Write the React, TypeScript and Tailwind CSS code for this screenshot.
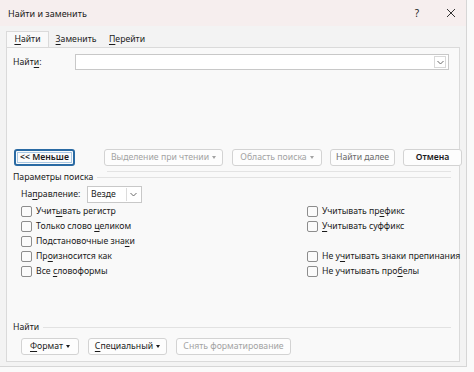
import React from 'react';

function U({ children }: { children: React.ReactNode }) {
  return <span className="underline underline-offset-[1.5px]">{children}</span>;
}

function Caret() {
  return <span className="ml-[3px] inline-block border-x-[2.5px] border-t-[3px] border-x-transparent border-t-current" />;
}

function Chevron() {
  return (
    <svg width="9" height="9" viewBox="0 0 9 9" fill="none" stroke="#6b6b6b" strokeWidth="1">
      <path d="M1.5 3l3 3 3-3" />
    </svg>
  );
}

function Btn({ children, disabled, className = '' }: { children: React.ReactNode; disabled?: boolean; className?: string }) {
  return (
    <div
      className={`flex h-[17px] shrink-0 items-center justify-center whitespace-nowrap rounded-[3px] border border-[#d3d3d3] bg-[#fdfdfd] ${disabled ? 'text-[#a3a3a3]' : 'text-[#1b1b1b]'} ${className}`}
    >
      {children}
    </div>
  );
}

function Check({ children }: { children: React.ReactNode }) {
  return (
    <div className="flex h-[15px] items-center gap-[4px] whitespace-nowrap">
      <span className="h-[11px] w-[11px] shrink-0 rounded-[2px] border border-[#8d8d8d] bg-[#fbfbfb]" />
      <span>{children}</span>
    </div>
  );
}

function Legend({ children, className = '' }: { children: React.ReactNode; className?: string }) {
  return (
    <div className={`flex h-[10px] items-center gap-[4px] whitespace-nowrap ${className}`}>
      <span>{children}</span>
      <span className="h-px flex-1 bg-[#e2e2e2]" />
    </div>
  );
}

export default function App() {
  return (
    <div className="h-[372px] w-[474px] bg-[#fafafa] text-[8.7px] leading-none text-[#1b1b1b]" style={{ fontFamily: '"Noto Sans", sans-serif' }}>
      <div className="flex h-[367px] w-[467px] flex-col border-b border-r border-[#d6d6d6] bg-[#f3f3f3]">
        {/* title bar */}
        <div className="flex h-[26px] items-center bg-[#f6eeee] pl-[8px] pr-[10px] text-[9px]">
          <span className="flex-1">Найти и заменить</span>
          <span className="mr-[27px] text-[10px]">?</span>
          <svg width="10" height="10" viewBox="0 0 10 10" stroke="#333" strokeWidth="1">
            <path d="M1 1l8 8M9 1l-8 8" />
          </svg>
        </div>

        {/* tabs */}
        <div className="mt-[5px] flex h-[16px] items-end whitespace-nowrap px-[6px]">
          <div className="flex h-[16px] w-[43px] items-center justify-center border-x border-t border-[#dadada] bg-[#f9f9f9]">
            <span>
              <U>Н</U>айти
            </span>
          </div>
          <div className="flex h-[15px] w-[54px] items-center justify-center">
            <span>
              <U>З</U>аменить
            </span>
          </div>
          <div className="flex h-[15px] w-[48px] items-center justify-center">
            <span>
              <U>П</U>ерейти
            </span>
          </div>
        </div>

        {/* panel */}
        <div className="mx-[6px] mb-[4px] flex flex-1 flex-col border border-[#dadada] bg-[#f9f9f9] px-[6px] pt-[6px]">
          <div className="flex h-[16px] items-center">
            <span className="w-[62px] shrink-0">
              Найт<U>и</U>:
            </span>
            <div className="flex h-[16px] flex-1 items-center justify-end border border-[#c8c8c8] bg-white pr-[2px]">
              <span className="flex h-[12px] w-[12px] items-center justify-center border border-[#d8d8d8]">
                <Chevron />
              </span>
            </div>
            <span className="w-[4px] shrink-0" />
          </div>

          {/* buttons row */}
          <div className="mt-[79px] flex h-[17px] items-center">
            <div className="ml-[1px] flex h-[17px] w-[61px] shrink-0 items-center justify-center whitespace-nowrap rounded-[3px] border-2 border-[#2a6aa3] bg-[#fbfbfb] font-semibold outline outline-1 -outline-offset-4 outline-[#a9c7e2]">
              {'<< '}Мень<U>ш</U>е
            </div>
            <Btn disabled className="ml-[29px] w-[119px]">
              Выделение при чтении
              <Caret />
            </Btn>
            <Btn disabled className="ml-[9px] w-[90px]">
              Область поиска
              <Caret />
            </Btn>
            <Btn className="ml-[8px] w-[65px] text-[#6a6a6a]">Найти далее</Btn>
            <Btn className="ml-[8px] w-[59px] font-semibold">Отмена</Btn>
          </div>

          <div className="ml-[94px] mr-[2px] mt-[5px] h-px bg-[#e3e3e3]" />

          <Legend className="mr-[2px]">Параметры поиска</Legend>

          <div className="ml-[8px] mt-[4px] flex h-[17px] items-center whitespace-nowrap">
            <span className="w-[66px] shrink-0">
              На<U>п</U>равление:
            </span>
            <div className="flex h-[17px] w-[55px] items-center justify-between border border-[#c8c8c8] bg-white pl-[3px] pr-[2px]">
              <span>Везде</span>
              <span className="flex h-[13px] w-[13px] items-center justify-center border-l border-[#dcdcdc]">
                <Chevron />
              </span>
            </div>
          </div>

          <div className="ml-[8px] mt-[1px] flex">
            <div className="flex w-[286px] shrink-0 flex-col">
              <Check>
                Учит<U>ы</U>вать регистр
              </Check>
              <Check>
                Только слово <U>ц</U>еликом
              </Check>
              <Check>
                Подстановочные зна<U>к</U>и
              </Check>
              <Check>
                Пр<U>о</U>износится как
              </Check>
              <Check>
                Все <U>с</U>ловоформы
              </Check>
            </div>
            <div className="flex flex-col">
              <Check>
                Учитывать пр<U>е</U>фикс
              </Check>
              <Check>
                <U>У</U>читывать суффикс
              </Check>
              <div className="h-[15px]" />
              <Check>
                Не у<U>ч</U>итывать знаки препинания
              </Check>
              <Check>
                Не учитывать про<U>б</U>елы
              </Check>
            </div>
          </div>

          <Legend className="mr-[2px] mt-[43px]">Найти</Legend>

          <div className="ml-[8px] mt-[6px] flex items-center gap-[9px]">
            <Btn className="w-[58px]">
              <U>Ф</U>ормат
              <Caret />
            </Btn>
            <Btn className="w-[79px]">
              <U>С</U>пециальный
              <Caret />
            </Btn>
            <Btn disabled className="w-[115px]">
              Снять форматирование
            </Btn>
          </div>
        </div>
      </div>
    </div>
  );
}
